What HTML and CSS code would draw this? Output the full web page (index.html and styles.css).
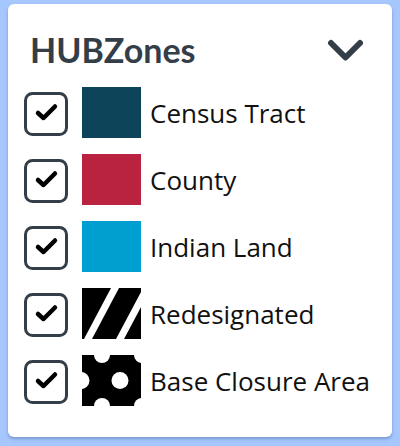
FILE: index.html
```html
<!DOCTYPE html>
<html lang="en">
<head>
<meta charset="utf-8">
<title>HUBZones legend</title>
<link rel="stylesheet" href="styles.css">
</head>
<body>
<div class="card">
  <div class="header">
    <h2 class="title">HUBZones</h2>
    <svg class="chevron" width="36" height="24" viewBox="0 0 36 24"><polyline points="4,4 18.5,18.5 33,4" fill="none" stroke="#343e48" stroke-width="6" stroke-linecap="round" stroke-linejoin="round"/></svg>
  </div>
  <ul class="list">
    <li class="row">
      <svg class="check" width="44" height="44" viewBox="0 0 44 44"><rect x="1.5" y="1.5" width="41" height="41" rx="7" fill="#fff" stroke="#343e48" stroke-width="3"/><polyline points="14,21 19.5,26 31,14.5" fill="none" stroke="#000" stroke-width="4.5" stroke-linecap="round" stroke-linejoin="round"/></svg>
      <span class="swatch census"></span>
      <span class="label">Census Tract</span>
    </li>
    <li class="row">
      <svg class="check" width="44" height="44" viewBox="0 0 44 44"><rect x="1.5" y="1.5" width="41" height="41" rx="7" fill="#fff" stroke="#343e48" stroke-width="3"/><polyline points="14,21 19.5,26 31,14.5" fill="none" stroke="#000" stroke-width="4.5" stroke-linecap="round" stroke-linejoin="round"/></svg>
      <span class="swatch county"></span>
      <span class="label">County</span>
    </li>
    <li class="row">
      <svg class="check" width="44" height="44" viewBox="0 0 44 44"><rect x="1.5" y="1.5" width="41" height="41" rx="7" fill="#fff" stroke="#343e48" stroke-width="3"/><polyline points="14,21 19.5,26 31,14.5" fill="none" stroke="#000" stroke-width="4.5" stroke-linecap="round" stroke-linejoin="round"/></svg>
      <span class="swatch indian"></span>
      <span class="label">Indian Land</span>
    </li>
    <li class="row">
      <svg class="check" width="44" height="44" viewBox="0 0 44 44"><rect x="1.5" y="1.5" width="41" height="41" rx="7" fill="#fff" stroke="#343e48" stroke-width="3"/><polyline points="14,21 19.5,26 31,14.5" fill="none" stroke="#000" stroke-width="4.5" stroke-linecap="round" stroke-linejoin="round"/></svg>
      <svg class="swatch" width="59" height="51" viewBox="0 0 59 51">
        <rect width="59" height="51" fill="#000"/>
        <polygon points="29,0 37,0 10,51 2,51" fill="#fff"/>
        <polygon points="59,4 59,19 42,51 34,51" fill="#fff"/>
      </svg>
      <span class="label">Redesignated</span>
    </li>
    <li class="row">
      <svg class="check" width="44" height="44" viewBox="0 0 44 44"><rect x="1.5" y="1.5" width="41" height="41" rx="7" fill="#fff" stroke="#343e48" stroke-width="3"/><polyline points="14,21 19.5,26 31,14.5" fill="none" stroke="#000" stroke-width="4.5" stroke-linecap="round" stroke-linejoin="round"/></svg>
      <svg class="swatch" width="59" height="51" viewBox="0 0 59 51">
        <rect width="59" height="51" fill="#000"/>
        <g fill="#fff">
          <circle cx="20" cy="0" r="8"/>
          <circle cx="60" cy="0" r="8"/>
          <circle cx="-1" cy="25.5" r="8.5"/>
          <circle cx="38" cy="25.5" r="8.5"/>
          <circle cx="20" cy="51" r="8"/>
          <circle cx="60" cy="51" r="8"/>
        </g>
      </svg>
      <span class="label">Base Closure Area</span>
    </li>
  </ul>
</div>
</body>
</html>
```

FILE: styles.css
```css
html, body {
  margin: 0;
  padding: 0;
}
body {
  background: #a5c7fd;
  width: 400px;
  height: 446px;
  overflow: hidden;
  font-family: Lato, "Open Sans", Arial, sans-serif;
}
.card {
  margin: 4px 8px 0 8px;
  height: 433px;
  box-sizing: border-box;
  background: #fff;
  border-radius: 6px;
  box-shadow: 0 2px 3px rgba(40, 70, 130, 0.35);
  padding: 24px 16px 0 16px;
}
.header {
  height: 44px;
  display: flex;
  align-items: center;
  justify-content: space-between;
  padding: 0 13px 0 6px;
}
.title {
  margin: 0;
  font-size: 34px;
  line-height: 1;
  font-weight: 700;
  color: #343e48;
}
.chevron {
  display: block;
  margin-top: 2px;
}
.list {
  list-style: none;
  margin: 15px 0 0 0;
  padding: 0;
  display: flex;
  flex-direction: column;
  gap: 16px;
}
.row {
  height: 51px;
  display: flex;
  align-items: center;
}
.check {
  display: block;
  align-self: flex-start;
  margin-top: 5px;
  flex: none;
}
.swatch {
  display: block;
  width: 59px;
  height: 51px;
  flex: none;
  margin-left: 14px;
}
.census { background: #0e4459; }
.county { background: #b92340; }
.indian { background: #009fcf; }
.label {
  margin-left: 9px;
  font-family: "Open Sans", Lato, Arial, sans-serif;
  font-size: 26px;
  line-height: 1;
  color: #111;
}
```
